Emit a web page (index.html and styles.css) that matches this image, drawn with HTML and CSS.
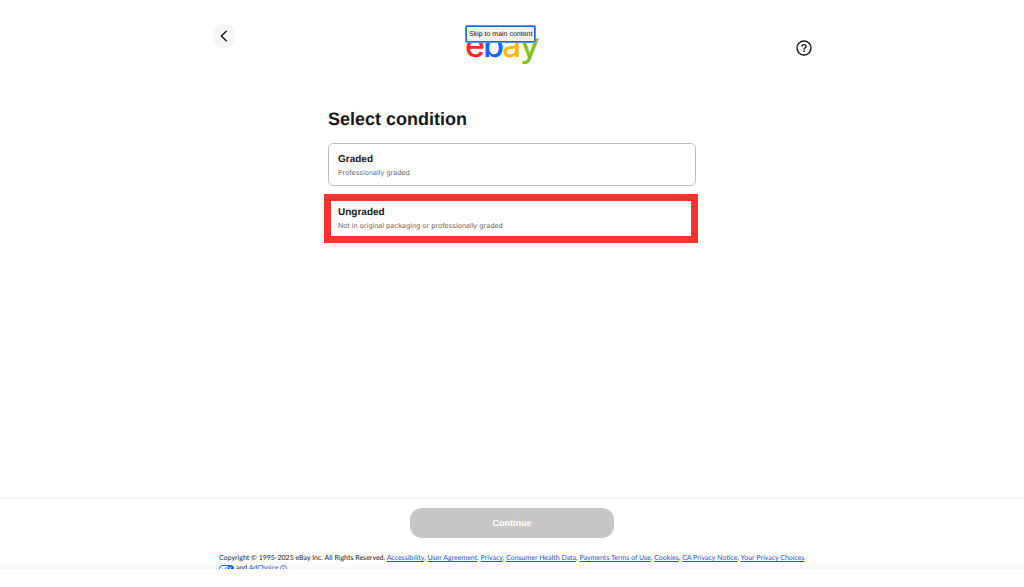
FILE: index.html
```html
<!DOCTYPE html>
<html lang="en">
<head>
<meta charset="utf-8">
<meta name="viewport" content="width=device-width, initial-scale=1">
<title>Select condition | eBay</title>
<link rel="stylesheet" href="styles.css">
</head>
<body>
<div class="screen">
  <header class="header">
    <button class="back" type="button" aria-label="Back">
      <svg viewBox="0 0 24 24" width="24" height="24" aria-hidden="true"><path d="M14.3 7.2 9.3 12l5 4.8" fill="none" stroke="currentColor" stroke-width="1.5" stroke-linecap="round" stroke-linejoin="round"/></svg>
    </button>
    <div class="brand">
      <a class="logo" href="#" aria-label="eBay">
        <svg viewBox="0 0 76 36" width="76" height="36" aria-hidden="true">
          <g class="logo-letters">
            <text x="1" y="27" fill="#f02d2d">e</text>
            <text x="19" y="27" fill="#0968f6">b</text>
            <text x="38" y="27" fill="#ffb800">a</text>
            <text x="56" y="27" fill="#86c020">y</text>
          </g>
        </svg>
      </a>
      <a class="skip" href="#main">Skip to main content</a>
    </div>
    <button class="help" type="button" aria-label="Help">
      <svg viewBox="0 0 16 16" width="16" height="16" aria-hidden="true"><circle cx="8" cy="8" r="7" fill="none" stroke="currentColor" stroke-width="1.4"/><path d="M6 6.6c0-1.2.8-2 2-2s2.1.7 2.1 1.8c0 1.4-2 1.5-2 3" fill="none" stroke="currentColor" stroke-width="1.4"/><circle cx="8.1" cy="11.2" r=".9" fill="currentColor"/></svg>
    </button>
  </header>
  <main class="main" id="main">
    <h1 class="title">Select condition</h1>
    <button class="option" type="button">
      <span class="option-name">Graded</span>
      <span class="option-note">Professionally graded</span>
    </button>
    <button class="option option-marked" type="button">
      <span class="option-name">Ungraded</span>
      <span class="option-note">Not in original packaging or professionally graded</span>
    </button>
  </main>
  <footer class="footer">
    <button class="continue" type="button" disabled>Continue</button>
    <p class="legal">Copyright © 1995-2025 eBay Inc. All Rights Reserved. <a href="#">Accessibility</a>, <a href="#">User Agreement</a>, <a href="#">Privacy</a>, <a href="#">Consumer Health Data</a>, <a href="#">Payments Terms of Use</a>, <a href="#">Cookies</a>, <a href="#">CA Privacy Notice</a>, <a href="#">Your Privacy Choices <svg class="choices" viewBox="0 0 30 14" width="15" height="7" aria-hidden="true"><rect x="1" y="1" width="28" height="12" rx="6" fill="#fff" stroke="#06f" stroke-width="2"/><path d="M18 1h5a6 6 0 0 1 0 12h-8z" fill="#06f"/><path d="m7 7 3 3 5-6" fill="none" stroke="#06f" stroke-width="1.6"/><path d="m19 4 6 6m0-6-6 6" stroke="#fff" stroke-width="1.6"/></svg></a> and <a href="#">AdChoice <svg class="choices" viewBox="0 0 7 7" width="7" height="7" aria-hidden="true"><circle cx="3.5" cy="3.5" r="3" fill="none" stroke="#2450e0" stroke-width=".8"/><path d="M3.5 3v2.2M3.5 1.6v.8" stroke="#2450e0" stroke-width=".8"/></svg></a></p>
  </footer>
</div>
</body>
</html>
```
FILE: styles.css
```css
* { box-sizing: border-box; }
body {
  margin: 0;
  height: 100vh;
  padding-bottom: 18px;
  background: #fff;
  color: #191919;
  font-family: "Liberation Sans", Arial, sans-serif;
  text-rendering: geometricPrecision;
}
button {
  font: inherit;
  color: inherit;
  text-rendering: inherit;
}
.screen {
  height: 100%;
  display: flex;
  flex-direction: column;
  overflow: hidden;
}
.header {
  display: grid;
  grid-template-columns: 1fr auto 1fr;
  align-items: start;
  width: 100%;
  max-width: 600px;
  margin: 0 auto;
  padding-top: 24px;
}
.back {
  width: 24px;
  height: 24px;
  padding: 0;
  border: 0;
  border-radius: 50%;
  background: #f7f7f7;
}
.back svg, .help svg, .logo svg { display: block; }
.brand {
  position: relative;
  margin-right: 20px;
  padding-top: 6px;
}
.logo { display: block; }
.logo-letters {
  font-family: Inter, sans-serif;
  font-size: 34px;
  font-weight: 500;
}
.skip {
  position: absolute;
  top: 2px;
  left: 2px;
  padding: 4px 2px 3px;
  border: 1px solid #1f66d0;
  border-radius: 1px;
  box-shadow: 0 0 0 1px #5c94e6;
  background: #f5f1ec;
  color: #191919;
  font-size: 7px;
  line-height: 7px;
  text-decoration: none;
  white-space: nowrap;
}
.help {
  justify-self: end;
  margin-top: 16px;
  padding: 0;
  border: 0;
  background: none;
}
.main {
  flex: 1;
  width: 100%;
  max-width: 368px;
  margin: 0 auto;
  padding-top: 41px;
}
.title {
  margin: 0 0 12px;
  font-size: 18px;
  line-height: 24px;
}
.option {
  display: block;
  width: 100%;
  margin: 0 0 8px;
  padding: 9px 9px 7px;
  border: 1px solid #bdbdbd;
  border-radius: 5px;
  background: #fff;
  text-align: left;
}
.option-name, .option-note { display: block; }
.option-name {
  font-size: 10px;
  font-weight: 700;
  line-height: 14px;
}
.option-note {
  color: #666;
  font-family: Inter, sans-serif;
  font-size: 7px;
  line-height: 11px;
}
.option-marked {
  width: calc(100% + 6px);
  margin-left: -4px;
  padding: 5px 7px;
  border: 7px solid #ff3131;
  border-radius: 0;
}
.footer {
  flex: none;
  height: 71px;
  padding-top: 9px;
  border-top: 1px solid #f2f2f2;
  box-shadow: 0 -1px 2px #eee, inset 0 -6px 6px -5px #eee;
}
.continue {
  display: block;
  width: 204px;
  height: 30px;
  margin: 0 auto 15px;
  border: 0;
  border-radius: 12px;
  background: #c7c7c7;
  color: #fff;
  font-size: 9px;
  font-weight: 700;
}
.legal {
  max-width: 586px;
  margin: 0 auto;
  font-family: Lato, sans-serif;
  font-size: 7px;
  line-height: 10px;
}
.legal a { color: #2450e0; }
.choices { vertical-align: -2px; }
```
